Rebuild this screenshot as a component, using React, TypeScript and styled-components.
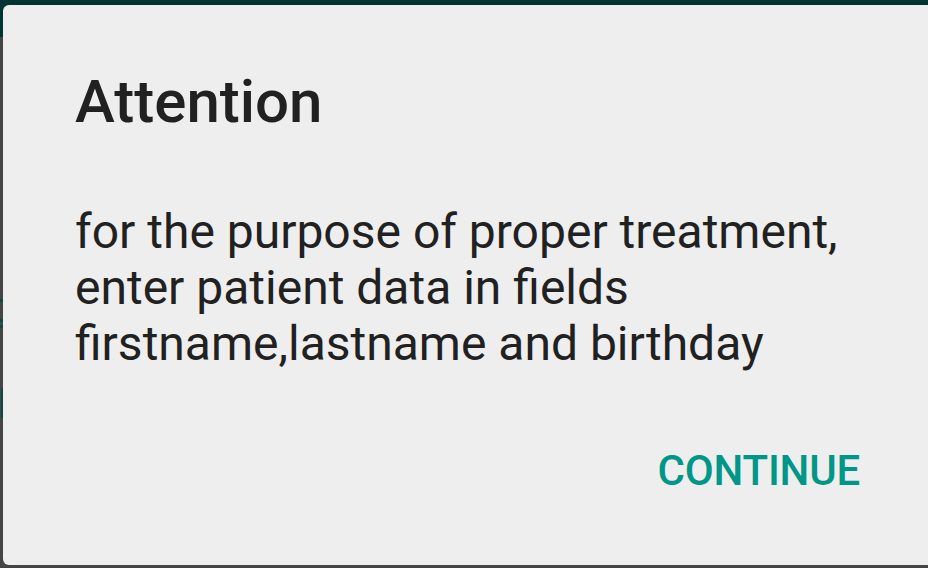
import React from "react";
import styled, { createGlobalStyle } from "styled-components";

const Global = createGlobalStyle`
  html, body {
    margin: 0;
    padding: 0;
    width: 928px;
    height: 568px;
    overflow: hidden;
    background: #454545;
    font-family: Roboto, "Noto Sans", Arial, sans-serif;
  }
  #root { width: 928px; height: 568px; }
`;

const Screen = styled.div`
  position: relative;
  width: 928px;
  height: 568px;
  overflow: hidden;
  display: flex;
  flex-direction: column;
  background: #454545;
`;

const AppBar = styled.div`
  height: 37px;
  flex: none;
  background: #003530;
`;

const Content = styled.div`
  display: flex;
  flex-direction: column;
  align-items: flex-start;
  padding-top: 262px;
`;

const Underline = styled.div<{ $gap: number; $width: number }>`
  margin-top: ${(p) => p.$gap}px;
  height: 3px;
  width: ${(p) => p.$width}px;
  background: #0b4a44;
`;

const Bar = styled.div`
  margin-top: 60px;
  margin-left: 1px;
  width: 2px;
  height: 30px;
  background: #0b4a44;
`;

const Dialog = styled.div`
  position: absolute;
  top: 5px;
  left: 3px;
  width: 945px;
  height: 560px;
  box-sizing: border-box;
  background: #eeeeee;
  border-radius: 6px;
  padding: 62px 0 0 72px;
  display: flex;
  flex-direction: column;
`;

const Title = styled.h1`
  margin: 0;
  font-family: Roboto, sans-serif;
  font-weight: 500;
  font-size: 60px;
  line-height: 70px;
  color: #212121;
`;

const Message = styled.p`
  margin: 67px 0 0 0;
  font-family: Roboto, sans-serif;
  font-weight: 400;
  font-size: 48px;
  line-height: 56px;
  color: #212121;
`;

const Actions = styled.div`
  margin-top: 74px;
  display: flex;
  justify-content: flex-end;
  padding-right: 88px;
`;

const TextButton = styled.button`
  border: none;
  background: transparent;
  padding: 0;
  font-family: Roboto, sans-serif;
  font-weight: 500;
  font-size: 42px;
  line-height: 49px;
  color: #009688;
  letter-spacing: -0.2px;
  cursor: pointer;
`;

export default function App() {
  return (
    <>
      <Global />
      <Screen>
        <AppBar />
        <Content>
          <Underline $gap={0} $width={8} />
          <Underline $gap={17} $width={8} />
          <Underline $gap={3} $width={8} />
          <Bar />
        </Content>
        <Dialog>
          <Title>Attention</Title>
          <Message>
            for the purpose of proper treatment,
            <br />
            enter patient data in fields
            <br />
            firstname,lastname and birthday
          </Message>
          <Actions>
            <TextButton>CONTINUE</TextButton>
          </Actions>
        </Dialog>
      </Screen>
    </>
  );
}
